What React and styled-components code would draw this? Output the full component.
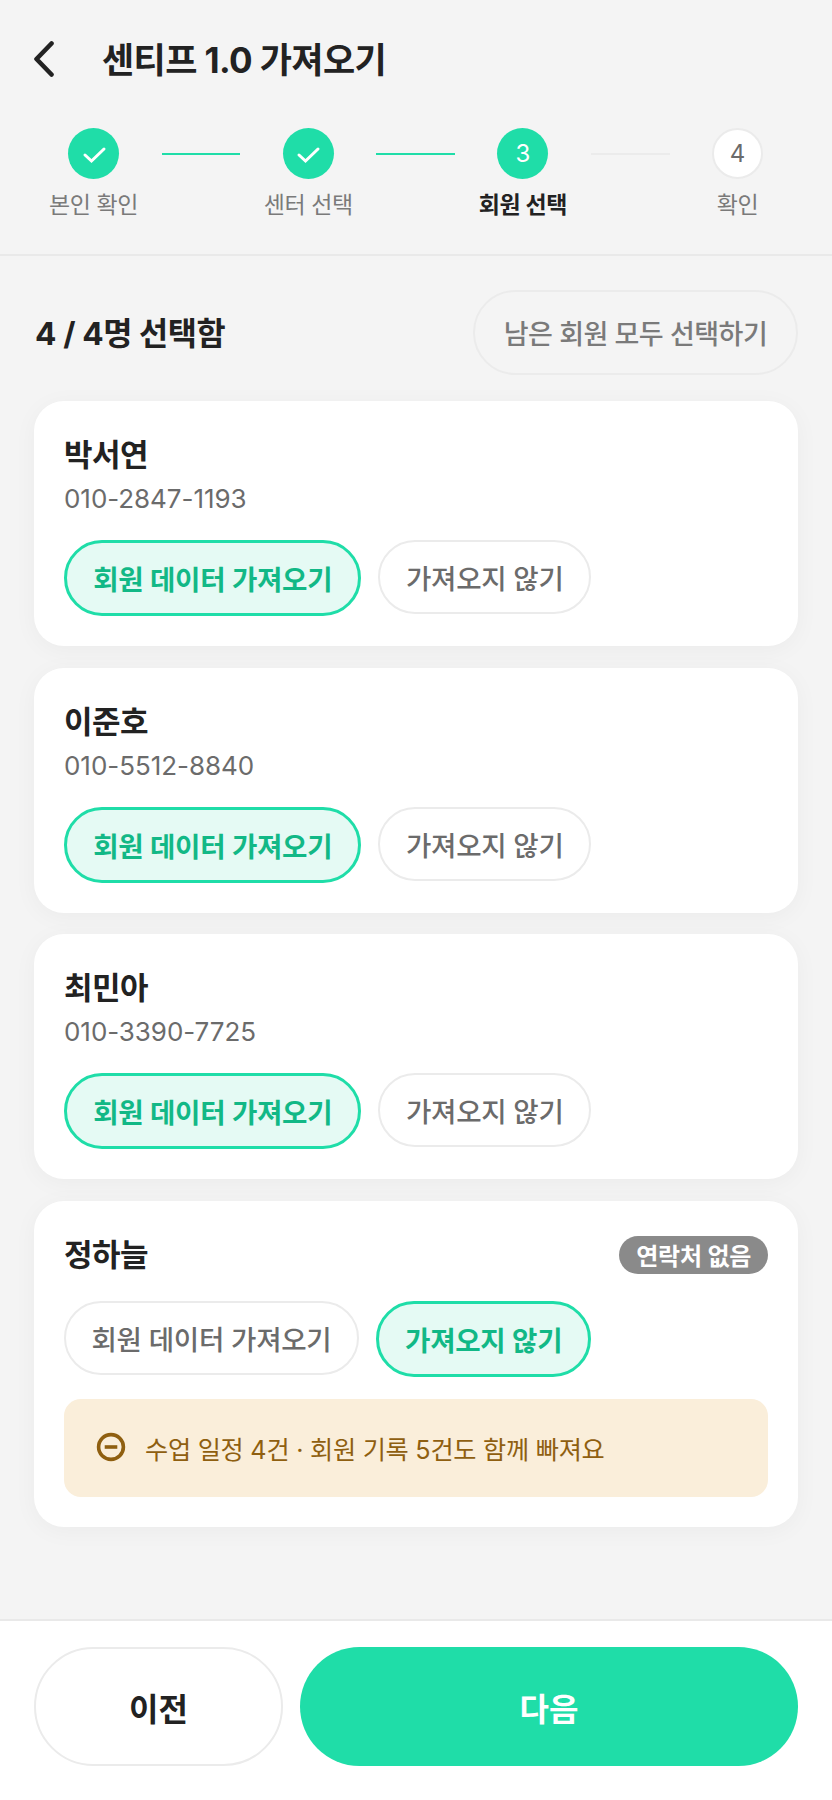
import styled, { createGlobalStyle } from "styled-components";

const GlobalStyle = createGlobalStyle`
  * { box-sizing: border-box; }
  html, body { margin: 0; padding: 0; background: #f4f4f4; }
  body {
    font-family: Inter, "Noto Sans CJK KR", sans-serif;
    color: #222222;
  }
`;

const Page = styled.div`
  display: flex;
  flex-direction: column;
  width: 832px;
  height: 1800px;
`;

const Header = styled.header`
  height: 256px;
  padding-top: 36px;
  border-bottom: 2px solid #e9e9e9;
`;

const TitleRow = styled.div`
  display: flex;
  align-items: center;
  height: 46px;
  padding-left: 34px;
`;

const BackIcon = styled.svg`
  width: 22px;
  height: 36px;
  margin-right: 46px;
`;

const Title = styled.h1`
  margin: 0;
  padding-top: 2px;
  font-size: 35px;
  font-weight: 700;
  letter-spacing: -0.6px;
  line-height: 46px;
`;

const Stepper = styled.div`
  display: flex;
  align-items: flex-start;
  margin-top: 46px;
  padding-left: 49.5px;
`;

const Step = styled.div`
  display: flex;
  flex-direction: column;
  align-items: center;
  width: 88px;
`;

const Dot = styled.div`
  display: flex;
  align-items: center;
  justify-content: center;
  width: 51px;
  height: 51px;
  border-radius: 50%;
  font-size: 24px;
  font-weight: 400;
  background: ${(p) => (p.$todo ? "#ffffff" : "#1fdda8")};
  border: ${(p) => (p.$todo ? "2px solid #ebebeb" : "none")};
  color: ${(p) => (p.$todo ? "#6b6b6b" : "#ffffff")};
`;

const StepLabel = styled.span`
  margin-top: 10px;
  font-size: 23px;
  line-height: 32px;
  letter-spacing: -0.4px;
  white-space: nowrap;
  font-weight: ${(p) => (p.$current ? 700 : 400)};
  color: ${(p) => (p.$current ? "#222222" : "#7a7a7a")};
`;

const Connector = styled.div`
  width: 78.7px;
  height: 2px;
  margin: 25px 24px 0;
  background: ${(p) => (p.$done ? "#1fdda8" : "#ebebeb")};
`;

const Main = styled.main`
  flex: 1;
  padding: 34px 34px 0;
`;

const SummaryRow = styled.div`
  display: flex;
  align-items: center;
  justify-content: space-between;
  margin-bottom: 26px;
`;

const Summary = styled.strong`
  margin-left: 1px;
  padding-bottom: 3px;
  font-size: 31.7px;
  font-weight: 700;
  letter-spacing: -0.4px;
`;

const SelectAll = styled.button`
  width: 325px;
  height: 85px;
  padding: 0;
  border: 2px solid #ebebeb;
  border-radius: 43px;
  background: transparent;
  font: inherit;
  font-size: 27px;
  font-weight: 500;
  letter-spacing: -0.5px;
  color: #7a7a7a;
`;

const CardList = styled.div`
  display: flex;
  flex-direction: column;
  gap: 21.6px;
`;

const Card = styled.section`
  padding: 34px 30px 30px;
  border-radius: 30px;
  background: #ffffff;
  box-shadow: 0 4px 24px rgba(0, 0, 0, 0.04);
`;

const NameRow = styled.div`
  display: flex;
  align-items: center;
  justify-content: space-between;
`;

const Name = styled.div`
  font-size: 31px;
  font-weight: 700;
  line-height: 40px;
  letter-spacing: -0.5px;
`;

const Phone = styled.div`
  margin-top: 7px;
  font-size: 26px;
  line-height: 34px;
  letter-spacing: -0.05px;
  color: #6b6b6b;
`;

const Badge = styled.span`
  display: flex;
  align-items: center;
  height: 38px;
  padding: 0 17px;
  border-radius: 19px;
  background: #8a8a8a;
  color: #ffffff;
  font-size: 24px;
  font-weight: 600;
  letter-spacing: -0.3px;
`;

const Chips = styled.div`
  display: flex;
  align-items: flex-start;
  gap: 17px;
  margin-top: ${(p) => p.$top}px;
`;

const Chip = styled.button`
  height: ${(p) => (p.$on ? 76 : 74)}px;
  padding: 0 ${(p) => (p.$on ? 26.2 : 25.5)}px;
  border: ${(p) => (p.$on ? "3px solid #1fdda8" : "2px solid #ebebeb")};
  border-radius: 38px;
  background: ${(p) => (p.$on ? "#e5faf4" : "#ffffff")};
  color: ${(p) => (p.$on ? "#12b886" : "#6b6b6b")};
  font: inherit;
  font-size: 27.6px;
  font-weight: ${(p) => (p.$on ? 600 : 500)};
  letter-spacing: -0.3px;
  white-space: nowrap;
`;

const Note = styled.div`
  display: flex;
  align-items: center;
  gap: 19px;
  height: 98px;
  margin-top: 22px;
  padding-left: 32px;
  border-radius: 17px;
  background: #faeeda;
  color: #8f5f10;
  font-size: 25.2px;
  font-weight: 400;
  letter-spacing: -0.25px;
`;

const NoteIcon = styled.svg`
  flex: none;
  width: 30px;
  height: 30px;
  margin-bottom: 3px;
`;

const Footer = styled.footer`
  display: flex;
  gap: 17px;
  height: 181px;
  padding: 26px 34px 0;
  border-top: 2px solid #e9e9e9;
  background: #ffffff;
`;

const PrevButton = styled.button`
  width: 249px;
  height: 119px;
  border: 2px solid #ebebeb;
  border-radius: 60px;
  background: #ffffff;
  color: #222222;
  font: inherit;
  font-size: 32px;
  font-weight: 700;
`;

const NextButton = styled.button`
  flex: 1;
  height: 119px;
  border: none;
  border-radius: 60px;
  background: #1fdda8;
  color: #ffffff;
  font: inherit;
  font-size: 32px;
  font-weight: 700;
`;

const Check = () => (
  <svg width="26" height="26" viewBox="0 0 26 26" fill="none" stroke="#fff" strokeWidth="3" strokeLinecap="round" strokeLinejoin="miter">
    <path d="M4 14 L10.5 20 L23 8" />
  </svg>
);

const MinusCircle = () => (
  <NoteIcon viewBox="0 0 30 30" fill="none" stroke="#8f5f10" strokeWidth="3.6">
    <circle cx="15" cy="15" r="12.4" />
    <path d="M8.7 15 H21.3" />
  </NoteIcon>
);

const steps = [
  { label: "본인 확인", done: true },
  { label: "센터 선택", done: true },
  { label: "회원 선택", num: 3, current: true },
  { label: "확인", num: 4, todo: true },
];

const members = [
  { name: "박서연", phone: "010-2847-1193" },
  { name: "이준호", phone: "010-5512-8840" },
  { name: "최민아", phone: "010-3390-7725" },
];

const StepItem = ({ step, last }) => (
  <>
    <Step>
      <Dot $todo={step.todo}>{step.done ? <Check /> : step.num}</Dot>
      <StepLabel $current={step.current}>{step.label}</StepLabel>
    </Step>
    {!last && <Connector $done={step.done} />}
  </>
);

const App = () => (
  <>
    <GlobalStyle />
    <Page>
      <Header>
        <TitleRow>
          <BackIcon viewBox="0 0 22 36" fill="none" stroke="#222" strokeWidth="4.6" strokeLinecap="round" strokeLinejoin="round">
            <path d="M17.5 2.5 L2.5 18 L17.5 33.5" />
          </BackIcon>
          <Title>센티프 1.0 가져오기</Title>
        </TitleRow>
        <Stepper>
          {steps.map((s, i) => (
            <StepItem key={s.label} step={s} last={i === steps.length - 1} />
          ))}
        </Stepper>
      </Header>
      <Main>
        <SummaryRow>
          <Summary>4 / 4명 선택함</Summary>
          <SelectAll>남은 회원 모두 선택하기</SelectAll>
        </SummaryRow>
        <CardList>
          {members.map((m) => (
            <Card key={m.name}>
              <Name>{m.name}</Name>
              <Phone>{m.phone}</Phone>
              <Chips $top={24}>
                <Chip $on>회원 데이터 가져오기</Chip>
                <Chip>가져오지 않기</Chip>
              </Chips>
            </Card>
          ))}
          <Card>
            <NameRow>
              <Name>정하늘</Name>
              <Badge>연락처 없음</Badge>
            </NameRow>
            <Chips $top={26.5}>
              <Chip>회원 데이터 가져오기</Chip>
              <Chip $on>가져오지 않기</Chip>
            </Chips>
            <Note>
              <MinusCircle />
              수업 일정 4건 · 회원 기록 5건도 함께 빠져요
            </Note>
          </Card>
        </CardList>
      </Main>
      <Footer>
        <PrevButton>이전</PrevButton>
        <NextButton>다음</NextButton>
      </Footer>
    </Page>
  </>
);

export default App;
